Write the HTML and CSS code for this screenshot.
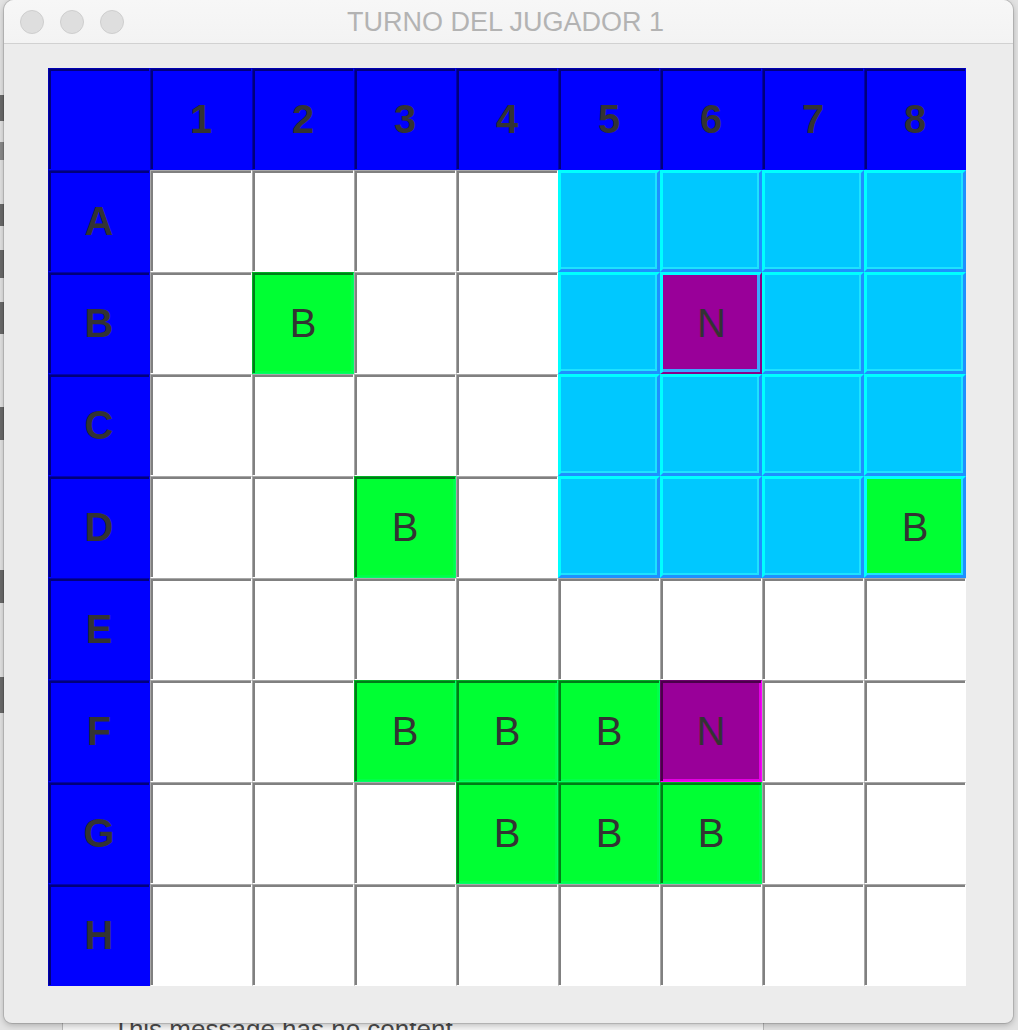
FILE: index.html
```html
<!DOCTYPE html>
<html lang="es">
<head>
<meta charset="utf-8">
<title>TURNO DEL JUGADOR 1</title>
<link rel="stylesheet" href="styles.css">
</head>
<body>
<div class="desktop">
  <div class="bg-strip s1"></div>
  <div class="bg-strip s2"></div>
  <div class="bg-strip s3"></div>
  <div class="bg-strip s4"></div>
  <div class="bg-strip s5"></div>
  <div class="bg-strip s6"></div>
  <div class="bg-strip s7"></div>
  <div class="bg-strip s8"></div>
  <div class="bg-panel"><span class="bg-text">This message has no content</span></div>

  <div class="window">
    <div class="titlebar">
      <div class="lights">
        <span class="light"></span>
        <span class="light"></span>
        <span class="light"></span>
      </div>
      <div class="title">TURNO DEL JUGADOR 1</div>
      <div></div>
    </div>
    <div class="content">
      <div class="board">
        <div class="cell hdr"></div>
        <div class="cell hdr">1</div>
        <div class="cell hdr">2</div>
        <div class="cell hdr">3</div>
        <div class="cell hdr">4</div>
        <div class="cell hdr">5</div>
        <div class="cell hdr">6</div>
        <div class="cell hdr">7</div>
        <div class="cell hdr">8</div>

        <div class="cell hdr">A</div>
        <div class="cell w"></div>
        <div class="cell w"></div>
        <div class="cell w"></div>
        <div class="cell w"></div>
        <div class="cell cy"></div>
        <div class="cell cy"></div>
        <div class="cell cy"></div>
        <div class="cell cy"></div>

        <div class="cell hdr">B</div>
        <div class="cell w"></div>
        <div class="cell g">B</div>
        <div class="cell w"></div>
        <div class="cell w"></div>
        <div class="cell cy"></div>
        <div class="cell cy-p">N</div>
        <div class="cell cy"></div>
        <div class="cell cy"></div>

        <div class="cell hdr">C</div>
        <div class="cell w"></div>
        <div class="cell w"></div>
        <div class="cell w"></div>
        <div class="cell w"></div>
        <div class="cell cy"></div>
        <div class="cell cy"></div>
        <div class="cell cy"></div>
        <div class="cell cy"></div>

        <div class="cell hdr">D</div>
        <div class="cell w"></div>
        <div class="cell w"></div>
        <div class="cell g">B</div>
        <div class="cell w"></div>
        <div class="cell cy"></div>
        <div class="cell cy"></div>
        <div class="cell cy"></div>
        <div class="cell cy-g">B</div>

        <div class="cell hdr">E</div>
        <div class="cell w"></div>
        <div class="cell w"></div>
        <div class="cell w"></div>
        <div class="cell w"></div>
        <div class="cell w"></div>
        <div class="cell w"></div>
        <div class="cell w"></div>
        <div class="cell w"></div>

        <div class="cell hdr">F</div>
        <div class="cell w"></div>
        <div class="cell w"></div>
        <div class="cell g">B</div>
        <div class="cell g">B</div>
        <div class="cell g">B</div>
        <div class="cell p">N</div>
        <div class="cell w"></div>
        <div class="cell w"></div>

        <div class="cell hdr">G</div>
        <div class="cell w"></div>
        <div class="cell w"></div>
        <div class="cell w"></div>
        <div class="cell g">B</div>
        <div class="cell g">B</div>
        <div class="cell g">B</div>
        <div class="cell w"></div>
        <div class="cell w"></div>

        <div class="cell hdr">H</div>
        <div class="cell w"></div>
        <div class="cell w"></div>
        <div class="cell w"></div>
        <div class="cell w"></div>
        <div class="cell w"></div>
        <div class="cell w"></div>
        <div class="cell w"></div>
        <div class="cell w"></div>
      </div>
    </div>
  </div>
</div>
</body>
</html>
```
FILE: styles.css
```css
* { box-sizing: border-box; }

html, body {
  margin: 0;
  padding: 0;
  width: 1018px;
  height: 1030px;
  overflow: hidden;
  background: #e2e2e2;
  font-family: "Liberation Sans", Arial, Helvetica, sans-serif;
}

.desktop {
  position: relative;
  width: 1018px;
  height: 1030px;
  padding-left: 4px;
}

/* things on the desktop behind the window */
.bg-strip {
  position: absolute;
  left: 0;
  width: 6px;
  background: #6a6a6a;
}
.s1 { top: 95px; height: 26px; }
.s2 { top: 142px; height: 18px; background: #8a8a8a; }
.s3 { top: 204px; height: 22px; }
.s4 { top: 250px; height: 28px; }
.s5 { top: 302px; height: 32px; }
.s6 { top: 407px; height: 33px; }
.s7 { top: 570px; height: 33px; }
.s8 { top: 677px; height: 36px; }

.bg-panel {
  position: absolute;
  left: 62px;
  top: 980px;
  width: 702px;
  height: 60px;
  background: #f4f4f4;
  border-left: 1px solid #b8b8b8;
  border-right: 1px solid #b8b8b8;
}
.bg-text {
  position: absolute;
  left: 50px;
  top: 34px;
  font-size: 26px;
  line-height: 30px;
  color: #4a4a4a;
  white-space: nowrap;
}

/* window */
.window {
  position: relative;
  z-index: 1;
  width: 1009px;
  height: 1023px;
  background: #ececec;
  border-radius: 10px 10px 8px 8px;
  box-shadow: 0 0 0 1px rgba(0,0,0,0.12), 0 2px 6px rgba(0,0,0,0.25);
  overflow: hidden;
}

.titlebar {
  height: 44px;
  background: linear-gradient(#f7f7f7, #f3f3f3);
  border-bottom: 1px solid #d1d1d1;
  display: grid;
  grid-template-columns: 1fr auto 1fr;
  align-items: center;
}

.lights {
  display: flex;
  gap: 16px;
  padding-left: 16px;
}

.light {
  width: 24px;
  height: 24px;
  border-radius: 50%;
  background: #dedede;
  border: 1px solid #cecece;
}

.title {
  font-size: 27px;
  color: #b3b3b3;
  white-space: nowrap;
  padding-top: 2px;
  margin-right: 6px;
}

.content {
  padding: 24px 47px 37px 44px;
}

.board {
  display: grid;
  grid-template-columns: repeat(9, 102px);
  grid-auto-rows: 102px;
}

.cell {
  display: flex;
  align-items: center;
  justify-content: center;
  font-size: 40px;
  color: #333333;
  border-style: solid;
  border-width: 1px;
}

/* lowered bevel header */
.hdr {
  background: #0000ff;
  font-weight: bold;
  border-color: #0000b2 #0000ff #0000ff #0000b2;
  box-shadow: inset 2px 2px 0 #00007c;
}

/* empty water: lowered bevel on white */
.w {
  background: #ffffff;
  border-color: #a8a8a8 #ffffff #ffffff #a8a8a8;
  box-shadow: inset 2px 2px 0 #808080;
}

/* boat: lowered bevel on green */
.g {
  background: #00ff33;
  border-color: #00b223 #00ff66 #00ff66 #00b223;
  box-shadow: inset 2px 2px 0 #007c18, inset -2px -2px 0 #00ff48;
}

/* sunk: lowered bevel on purple */
.p {
  background: #990099;
  border-color: #6b006b #ff00ff #ff00ff #6b006b;
  box-shadow: inset 2px 2px 0 #4a004a, inset -2px -2px 0 #e400e4;
}

/* highlighted zone */
.cy, .cy-g, .cy-p {
  border-width: 3px;
  border-color: #00ffff #1e90ff #1e90ff #00ffff;
  box-shadow: inset -2px -2px 0 #1ee2ff;
}
.cy { background: #00c8ff; }
.cy-g { background: #00ff33; }
.cy-p {
  background: #990099;
  border-color: #00ffff #8a008a #8a008a #00ffff;
  border-width: 3px 2px 2px 3px;
  box-shadow: inset -3px -3px 0 #3aa8ff;
}
```
